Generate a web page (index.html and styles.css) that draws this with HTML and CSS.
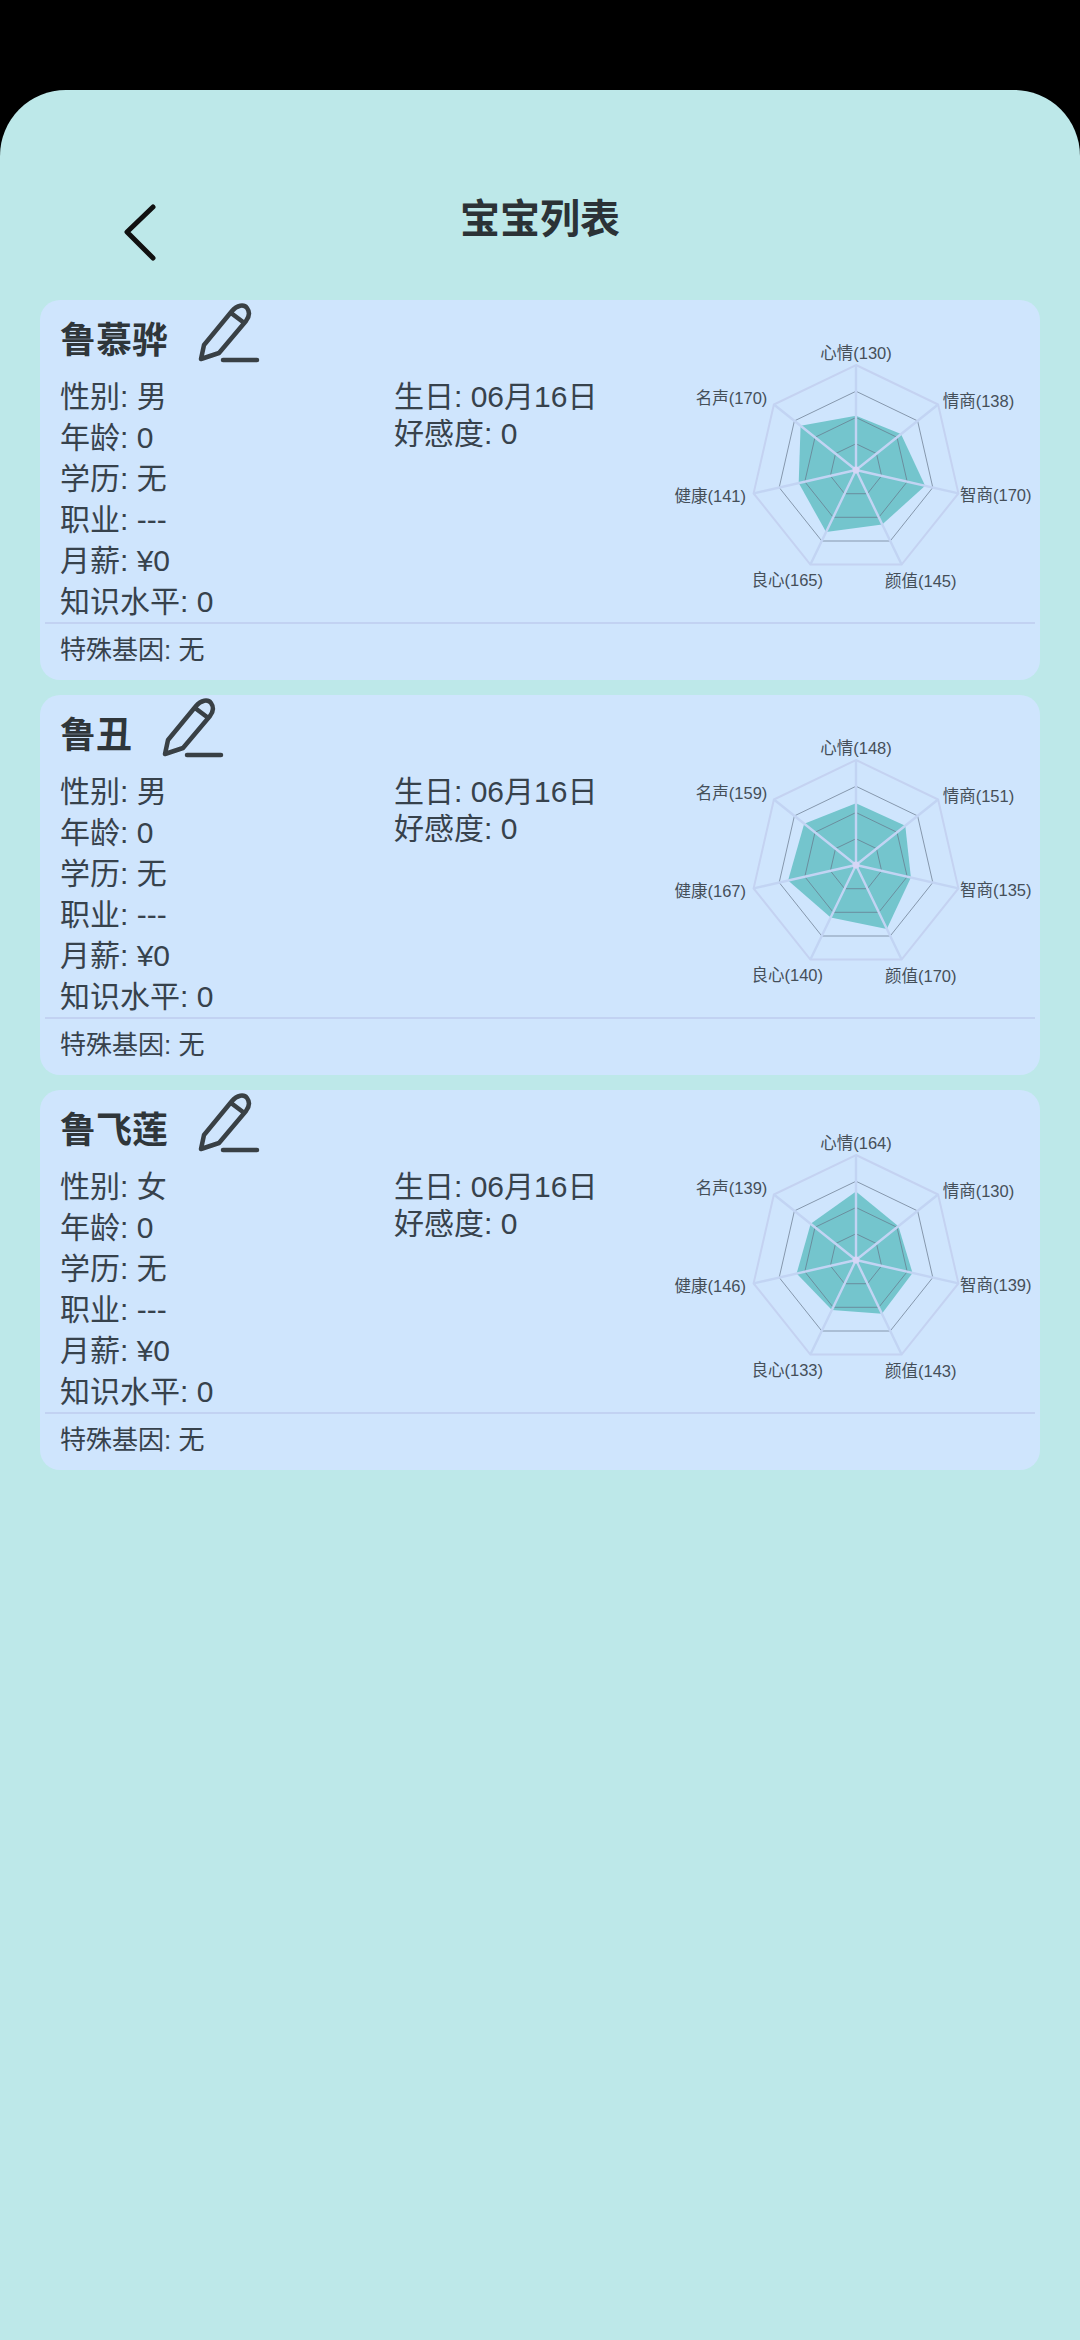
FILE: index.html
```html
<!DOCTYPE html>
<html lang="zh">
<head>
  <meta charset="utf-8">
  <title>宝宝列表</title>
  <link rel="stylesheet" href="styles.css">
</head>
<body>
  <!-- shared drawings: edit pencil and radar grid -->
  <svg class="defs">
    <symbol id="icon-edit" viewBox="5 5 65 65">
      <path class="edit-line" d="M11 64 L14 50 L42 16 C47 10 54 9 57 13 C60 17 59 22 56 26 L29 58 Z M41 18 L53 27 M33 65 H67"/>
    </symbol>
    <g id="radar-grid">
      <polygon class="ring-thin" points="0,-26.25 20.5,-16.4 25.6,5.8 11.4,23.7 -11.4,23.7 -25.6,5.8 -20.5,-16.4"/>
      <polygon class="ring-thin" points="0,-52.5 41,-32.7 51.2,11.7 22.8,47.3 -22.8,47.3 -51.2,11.7 -41,-32.7"/>
      <polygon class="ring-thin" points="0,-78.75 61.6,-49.1 76.8,17.5 34.2,71 -34.2,71 -76.8,17.5 -61.6,-49.1"/>
      <polygon class="ring-outer" points="0,-105 82.1,-65.5 102.4,23.4 45.6,94.6 -45.6,94.6 -102.4,23.4 -82.1,-65.5"/>
      <path class="spoke" d="M0 0 L0 -105 M0 0 L82.1 -65.5 M0 0 L102.4 23.4 M0 0 L45.6 94.6 M0 0 L-45.6 94.6 M0 0 L-102.4 23.4 M0 0 L-82.1 -65.5"/>
      <circle class="hub" r="3.5"/>
    </g>
  </svg>

  <div class="app">
    <div class="header">
      <svg class="back" viewBox="0 0 40 64"><path d="M33 7 L7 32 L33 58"/></svg>
      <h1>宝宝列表</h1>
    </div>

    <div class="baby-list">
      <div class="card">
        <div class="card-main">
          <div class="card-info">
            <div class="card-head">
              <div class="name">鲁慕骅</div>
              <svg class="edit"><use href="#icon-edit"/></svg>
            </div>
            <div class="stat-cols">
              <div class="stats">
                <div>性别: 男</div>
                <div>年龄: 0</div>
                <div>学历: 无</div>
                <div>职业: ---</div>
                <div>月薪: ¥0</div>
                <div>知识水平: 0</div>
              </div>
              <div class="stats-side">
                <div>生日: 06月16日</div>
                <div>好感度: 0</div>
              </div>
            </div>
          </div>
          <svg class="radar" viewBox="-186 -140 366 270">
            <polygon class="area" points="0,-54.2 45,-35.9 69.1,15.8 26.2,54.5 -29.9,62 -57.3,13.1 -55.4,-44.2"/>
            <use href="#radar-grid"/>
            <text class="mid" x="0" y="-111">心情(130)</text>
            <text x="86.7" y="-63">情商(138)</text>
            <text x="104" y="30.5">智商(170)</text>
            <text x="29" y="117">颜值(145)</text>
            <text class="end" x="-33" y="115.5">良心(165)</text>
            <text class="end" x="-110" y="32">健康(141)</text>
            <text class="end" x="-88.7" y="-66.5">名声(170)</text>
          </svg>
        </div>
        <div class="gene">特殊基因: 无</div>
      </div>

      <div class="card">
        <div class="card-main">
          <div class="card-info">
            <div class="card-head">
              <div class="name">鲁丑</div>
              <svg class="edit"><use href="#icon-edit"/></svg>
            </div>
            <div class="stat-cols">
              <div class="stats">
                <div>性别: 男</div>
                <div>年龄: 0</div>
                <div>学历: 无</div>
                <div>职业: ---</div>
                <div>月薪: ¥0</div>
                <div>知识水平: 0</div>
              </div>
              <div class="stats-side">
                <div>生日: 06月16日</div>
                <div>好感度: 0</div>
              </div>
            </div>
          </div>
          <svg class="radar" viewBox="-186 -140 366 270">
            <polygon class="area" points="0,-61.7 49.3,-39.3 54.9,12.5 30.8,63.9 -25.3,52.6 -67.9,15.5 -51.8,-41.3"/>
            <use href="#radar-grid"/>
            <text class="mid" x="0" y="-111">心情(148)</text>
            <text x="86.7" y="-63">情商(151)</text>
            <text x="104" y="30.5">智商(135)</text>
            <text x="29" y="117">颜值(170)</text>
            <text class="end" x="-33" y="115.5">良心(140)</text>
            <text class="end" x="-110" y="32">健康(167)</text>
            <text class="end" x="-88.7" y="-66.5">名声(159)</text>
          </svg>
        </div>
        <div class="gene">特殊基因: 无</div>
      </div>

      <div class="card">
        <div class="card-main">
          <div class="card-info">
            <div class="card-head">
              <div class="name">鲁飞莲</div>
              <svg class="edit"><use href="#icon-edit"/></svg>
            </div>
            <div class="stat-cols">
              <div class="stats">
                <div>性别: 女</div>
                <div>年龄: 0</div>
                <div>学历: 无</div>
                <div>职业: ---</div>
                <div>月薪: ¥0</div>
                <div>知识水平: 0</div>
              </div>
              <div class="stats-side">
                <div>生日: 06月16日</div>
                <div>好感度: 0</div>
              </div>
            </div>
          </div>
          <svg class="radar" viewBox="-186 -140 366 270">
            <polygon class="area" points="0,-68.4 42.4,-33.8 56.5,12.9 25.9,53.7 -24.1,50 -59.4,13.6 -45.3,-36.2"/>
            <use href="#radar-grid"/>
            <text class="mid" x="0" y="-111">心情(164)</text>
            <text x="86.7" y="-63">情商(130)</text>
            <text x="104" y="30.5">智商(139)</text>
            <text x="29" y="117">颜值(143)</text>
            <text class="end" x="-33" y="115.5">良心(133)</text>
            <text class="end" x="-110" y="32">健康(146)</text>
            <text class="end" x="-88.7" y="-66.5">名声(139)</text>
          </svg>
        </div>
        <div class="gene">特殊基因: 无</div>
      </div>
    </div>
  </div>
</body>
</html>
```

FILE: styles.css
```css
body {
  margin: 0;
  padding-top: 90px;
  background: #000000;
  font-family: "Liberation Sans", "Noto Sans CJK SC", sans-serif;
  color: #37424c;
}

.defs {
  display: block;
  width: 0;
  height: 0;
}

.app {
  min-height: 2250px;
  background: #bde8e9;
  border-radius: 66px 66px 0 0;
  display: flex;
  flex-direction: column;
}

.header {
  height: 210px;
  display: grid;
  grid-template-columns: 1fr auto 1fr;
  align-items: start;
}

.back {
  width: 40px;
  height: 64px;
  margin: 110px 0 0 120px;
  fill: none;
  stroke: #111111;
  stroke-width: 5;
  stroke-linecap: round;
  stroke-linejoin: round;
}

h1 {
  margin: 105px 0 0;
  font-size: 40px;
  line-height: 48px;
  font-weight: 700;
  color: #2b3236;
}

.baby-list {
  display: flex;
  flex-direction: column;
  gap: 15px;
  padding: 0 40px;
}

.card {
  background: #cfe5fd;
  border-radius: 20px;
}

.card-main {
  display: flex;
  align-items: flex-start;
  padding: 0 4px 0 20px;
}

.card-info {
  flex: 1;
}

.card-head {
  display: flex;
  gap: 27px;
  margin-bottom: 11px;
}

.name {
  margin-top: 21px;
  font-size: 36px;
  line-height: 40px;
  font-weight: 700;
  color: #2f363a;
}

.edit {
  width: 65px;
  height: 65px;
}

.edit-line {
  fill: none;
  stroke: #394045;
  stroke-width: 4.5;
  stroke-linecap: round;
  stroke-linejoin: round;
}

.stat-cols {
  display: grid;
  grid-template-columns: 334px 1fr;
}

.stats {
  font-size: 30px;
  line-height: 41px;
}

.stats-side {
  font-size: 30px;
  line-height: 37px;
  white-space: nowrap;
  padding-top: 2px;
}

.radar {
  width: 366px;
  height: 270px;
  margin-top: 30px;
  flex-shrink: 0;
}

.radar text {
  font-size: 16.5px;
  fill: #454f59;
}

.radar .mid {
  text-anchor: middle;
}

.radar .end {
  text-anchor: end;
}

.area {
  fill: #74c5cd;
}

.ring-thin {
  fill: none;
  stroke: #66758a;
  stroke-width: 0.7;
}

.ring-outer {
  fill: none;
  stroke: #c4d2f1;
  stroke-width: 2;
}

.spoke {
  fill: none;
  stroke: #c2d4f3;
  stroke-width: 2.4;
}

.hub {
  fill: #d6d6f6;
}

.gene {
  margin: 0 5px;
  padding: 8px 15px 12px;
  border-top: 2px solid #c2d2f2;
  font-size: 26px;
  line-height: 36px;
}
```
